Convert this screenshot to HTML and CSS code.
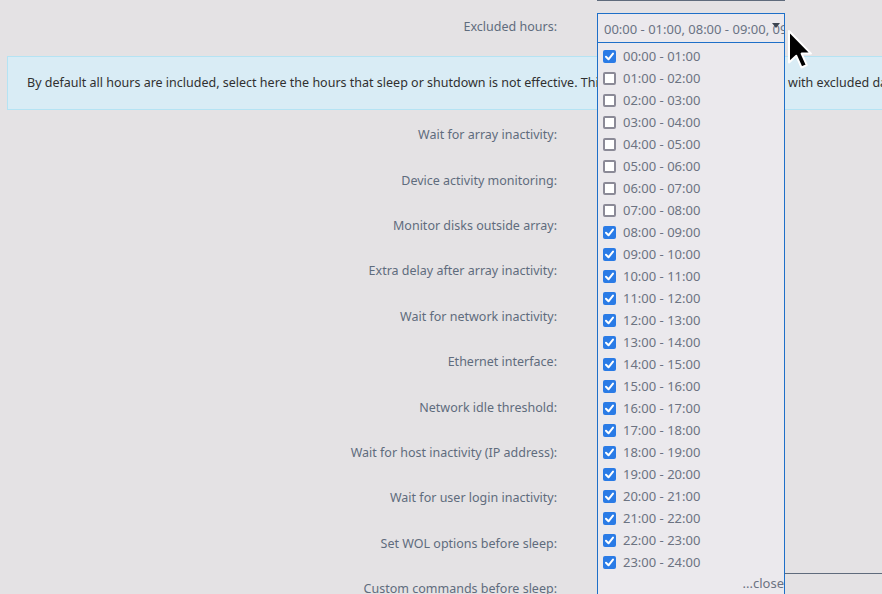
FILE: index.html
```html
<!DOCTYPE html>
<html>

<head>
    <meta name="viewport" content="width=device-width, initial-scale=1">
    <link rel="stylesheet" href="styles.css">
</head>

<body>
    <div class="page">
        <!-- bottom edge of the previous field -->
        <div class="prev-field"></div>

        <div class="row row-first">
            <div class="label">Excluded hours:</div>
            <div class="field">
                <div class="multi">
                    <div class="multi-head">
                        <span class="multi-value">00:00 - 01:00, 08:00 - 09:00, 09:00 - 10:00, 10:00 - 11:00</span>
                        <i class="caret"></i>
                    </div>
                    <div class="multi-list">
                        <label class="opt"><span class="box on"></span>00:00 - 01:00</label>
                        <label class="opt"><span class="box"></span>01:00 - 02:00</label>
                        <label class="opt"><span class="box"></span>02:00 - 03:00</label>
                        <label class="opt"><span class="box"></span>03:00 - 04:00</label>
                        <label class="opt"><span class="box"></span>04:00 - 05:00</label>
                        <label class="opt"><span class="box"></span>05:00 - 06:00</label>
                        <label class="opt"><span class="box"></span>06:00 - 07:00</label>
                        <label class="opt"><span class="box"></span>07:00 - 08:00</label>
                        <label class="opt"><span class="box on"></span>08:00 - 09:00</label>
                        <label class="opt"><span class="box on"></span>09:00 - 10:00</label>
                        <label class="opt"><span class="box on"></span>10:00 - 11:00</label>
                        <label class="opt"><span class="box on"></span>11:00 - 12:00</label>
                        <label class="opt"><span class="box on"></span>12:00 - 13:00</label>
                        <label class="opt"><span class="box on"></span>13:00 - 14:00</label>
                        <label class="opt"><span class="box on"></span>14:00 - 15:00</label>
                        <label class="opt"><span class="box on"></span>15:00 - 16:00</label>
                        <label class="opt"><span class="box on"></span>16:00 - 17:00</label>
                        <label class="opt"><span class="box on"></span>17:00 - 18:00</label>
                        <label class="opt"><span class="box on"></span>18:00 - 19:00</label>
                        <label class="opt"><span class="box on"></span>19:00 - 20:00</label>
                        <label class="opt"><span class="box on"></span>20:00 - 21:00</label>
                        <label class="opt"><span class="box on"></span>21:00 - 22:00</label>
                        <label class="opt"><span class="box on"></span>22:00 - 23:00</label>
                        <label class="opt"><span class="box on"></span>23:00 - 24:00</label>
                        <div class="multi-close">...close</div>
                    </div>
                </div>
            </div>
        </div>

        <div class="info">By default all hours are included, select here the hours that sleep or shutdown is not effective. This can be applied in combination with excluded days.</div>

        <div class="row"><div class="label">Wait for array inactivity:</div><div class="field"></div></div>
        <div class="row"><div class="label">Device activity monitoring:</div><div class="field"></div></div>
        <div class="row"><div class="label">Monitor disks outside array:</div><div class="field"></div></div>
        <div class="row"><div class="label">Extra delay after array inactivity:</div><div class="field"></div></div>
        <div class="row"><div class="label">Wait for network inactivity:</div><div class="field"></div></div>
        <div class="row"><div class="label">Ethernet interface:</div><div class="field"></div></div>
        <div class="row"><div class="label">Network idle threshold:</div><div class="field"></div></div>
        <div class="row"><div class="label">Wait for host inactivity (IP address):</div><div class="field"></div></div>
        <div class="row"><div class="label">Wait for user login inactivity:</div><div class="field"></div></div>
        <div class="row"><div class="label">Set WOL options before sleep:</div><div class="field"></div></div>
        <div class="row"><div class="label">Custom commands before sleep:</div><div class="field"><div class="textarea"></div></div></div>
    </div>

    <!-- mouse pointer -->
    <svg class="cursor" width="28" height="44" viewBox="0 0 28 44">
        <path d="M2 2 L2 33.5 L9.3 26.8 L14.5 38.5 L19.8 36.2 L14.6 24.6 L24 24.6 Z" fill="#000" stroke="#fff" stroke-width="2" stroke-linejoin="round"/>
    </svg>
</body>

</html>
```

FILE: styles.css
```css
/* Ajustes de sleep */
body {
    margin: 0;
    background-color: #e4e2e4;
    font-family: "Noto Sans", "Open Sans", sans-serif;
    font-size: 12.5px;
    color: #5f6c7d;
}

.page {
    position: relative;
    height: 594px;
    overflow: hidden;
}

.prev-field {
    margin-left: 597px;
    width: 188px;
    height: 1px;
    background-color: #5f6b7c;
}

.row {
    display: grid;
    grid-template-columns: 557px 1fr;
    column-gap: 40px;
    height: 45.4px;
    align-items: center;
}

.row-first {
    margin-top: 3px;
    height: 45px;
}

.label {
    text-align: right;
    white-space: nowrap;
}

.field {
    position: relative;
    align-self: stretch;
}

.info {
    margin: 7px -80px 2px 7px;
    height: 52px;
    line-height: 52px;
    padding-left: 19px;
    background-color: #d9ecf5;
    border: 1px solid #b5e3f3;
    color: #303030;
    white-space: nowrap;
}

/* select multiple desplegado */
.multi {
    position: absolute;
    top: 9px;
    left: 0;
    width: 188px;
    z-index: 2;
    font-size: 13px;
}

.multi-head {
    position: relative;
    height: 28px;
    line-height: 30px;
    padding-left: 6px;
    border: 1px solid #1e6fc8;
    background-color: #ebe9ed;
    overflow: hidden;
    white-space: nowrap;
    color: #6a7384;
}

.caret {
    position: absolute;
    top: 9px;
    right: 4px;
    width: 0;
    height: 0;
    border-left: 4px solid transparent;
    border-right: 4px solid transparent;
    border-top: 5px solid #3c4450;
}

.multi-list {
    height: 560px;
    padding-top: 2px;
    background-color: #ebe9ed;
    border-left: 1px solid #1e6fc8;
    border-right: 1px solid #1e6fc8;
    color: #6c7382;
}

.opt {
    display: flex;
    align-items: center;
    height: 22px;
    padding-left: 5px;
    white-space: nowrap;
}

.box {
    box-sizing: border-box;
    width: 13px;
    height: 13px;
    margin-right: 7px;
    border: 2px solid #8b8a97;
    border-radius: 2px;
    background-color: #fff;
}

.box.on {
    border: none;
    background: #2a7be6 url("data:image/svg+xml,%3Csvg xmlns='http://www.w3.org/2000/svg' width='13' height='13'%3E%3Cpath d='M3 6.8 L5.5 9.3 L10 3.6' fill='none' stroke='%23fff' stroke-width='2' stroke-linecap='round' stroke-linejoin='round'/%3E%3C/svg%3E") no-repeat;
}

.multi-close {
    height: 20px;
    line-height: 20px;
    text-align: right;
    color: #6c7382;
}

.textarea {
    position: absolute;
    top: 7px;
    left: 0;
    right: -40px;
    height: 80px;
    border-top: 1px solid #5f6b7c;
}

.cursor {
    position: absolute;
    left: 787px;
    top: 29px;
}
```
